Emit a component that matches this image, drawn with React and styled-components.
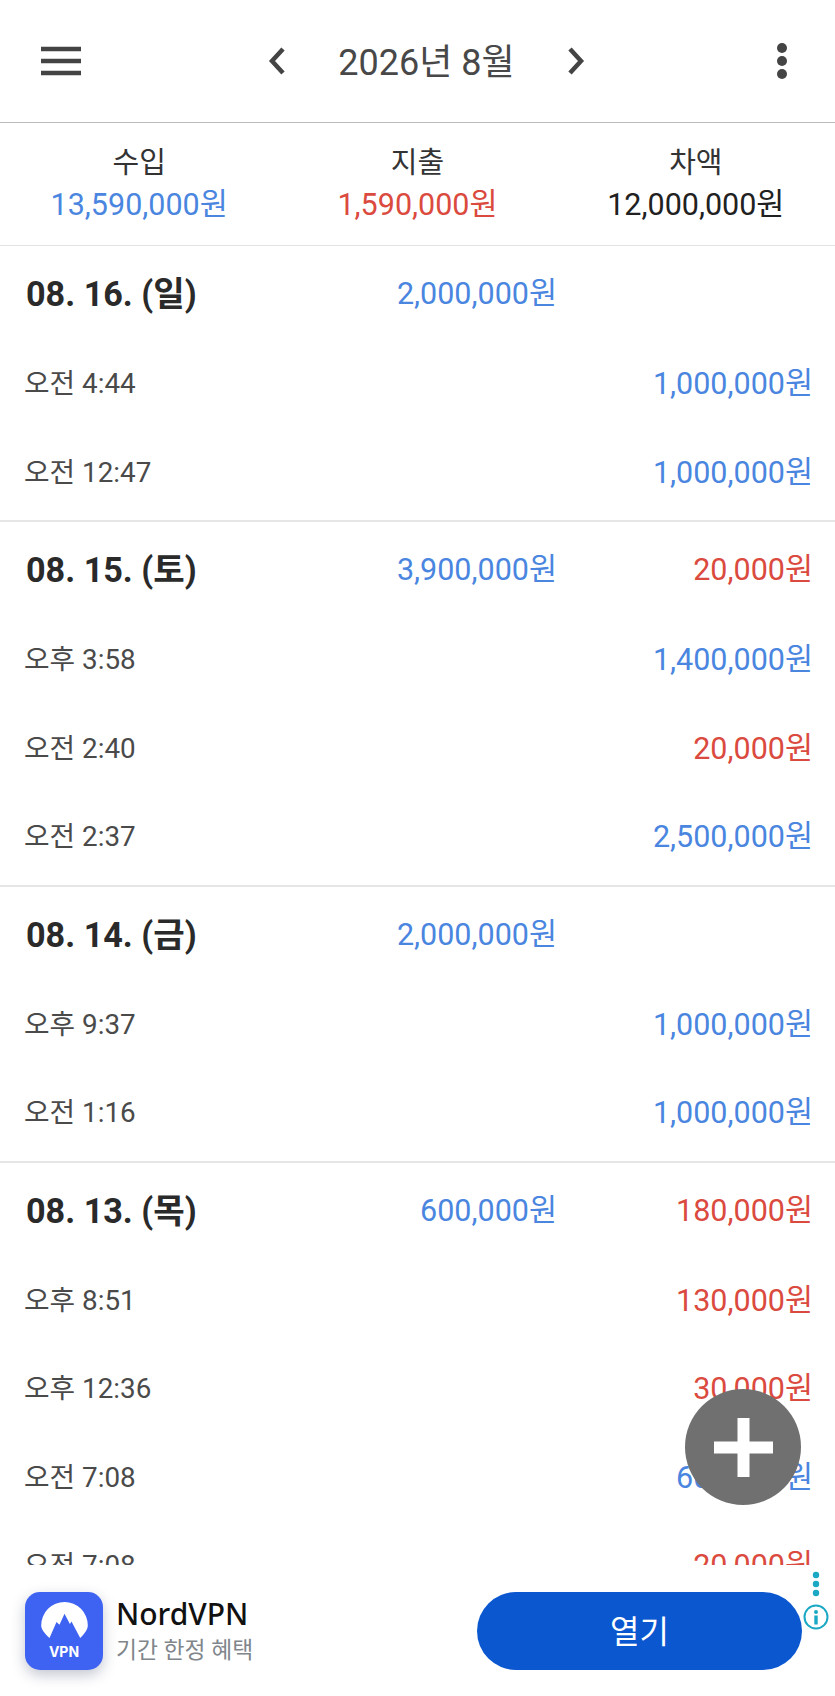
import styled, { createGlobalStyle } from 'styled-components';

const GlobalStyle = createGlobalStyle`
  html, body {
    margin: 0;
    padding: 0;
    background: #fff;
    font-family: Roboto, "Noto Sans CJK KR", sans-serif;
  }
`;

const BLUE = '#4a86e0';
const RED = '#db4a3e';

const Screen = styled.div`
  position: relative;
  width: 835px;
  height: 1696px;
  display: flex;
  flex-direction: column;
  overflow: hidden;
  background: #fff;
`;

const Header = styled.header`
  height: 122px;
  flex: none;
  display: flex;
  align-items: center;
  justify-content: space-between;
  padding: 0 48px 0 41px;
  border-bottom: 1px solid #bdbdbd;
`;

const IconButton = styled.svg`
  display: block;
  flex: none;
  color: #444;
`;

const MonthNav = styled.div`
  display: flex;
  align-items: center;
  gap: 30px;
  margin-right: 5px;
`;

const MonthTitle = styled.div`
  width: 219px;
  padding-top: 3px;
  text-align: center;
  font-size: 36px;
  line-height: 44px;
  color: #484848;
`;

const Summary = styled.section`
  height: 122px;
  flex: none;
  display: grid;
  grid-template-columns: repeat(3, 1fr);
  align-content: center;
  border-bottom: 1px solid #e4e4e4;
`;

const SummaryCell = styled.div`
  text-align: center;
`;

const SummaryLabel = styled.div`
  font-size: 29px;
  line-height: 42px;
  color: #333;
`;

const SummaryValue = styled.div`
  font-size: 30.5px;
  line-height: 42px;
  color: ${(p) => p.$color || '#212121'};
`;

const List = styled.main`
  flex: 1;
  min-height: 0;
  overflow: hidden;
`;

const Day = styled.section`
  padding-bottom: 6px;
  border-bottom: 2px solid #e6e6e6;

  &:last-child {
    border-bottom: none;
  }
`;

const DayHeader = styled.div`
  height: 90px;
  padding: 0 22px 1px 26px;
  display: flex;
  align-items: center;
`;

const DayDate = styled.div`
  flex: 1;
  font-size: 34.2px;
  font-weight: 700;
  color: #2a2a2a;
`;

const Amount = styled.div`
  font-size: 30.5px;
  text-align: right;
  color: ${(p) => p.$color};
`;

const DayExpense = styled(Amount)`
  width: 256px;
`;

const Row = styled.div`
  height: 88.5px;
  display: flex;
  align-items: center;
  justify-content: space-between;
  padding: 0 22px 0 24px;
`;

const Time = styled.div`
  font-size: 27.8px;
  color: #4a4a4a;
`;

const Fab = styled.button`
  position: absolute;
  left: 685px;
  top: 1389px;
  width: 116px;
  height: 116px;
  padding: 0;
  border: none;
  border-radius: 50%;
  background: #707070;
  display: flex;
  align-items: center;
  justify-content: center;
`;

const Ad = styled.aside`
  position: relative;
  height: 131px;
  flex: none;
  display: flex;
  align-items: center;
  padding: 0 33px 0 25px;
  background: #fff;
`;

const AdIcon = styled.div`
  width: 78px;
  height: 78px;
  flex: none;
  border-radius: 15px;
  background: #3e63f2;
  box-shadow: 0 5px 14px rgba(40, 50, 90, 0.28);
  display: flex;
  flex-direction: column;
  align-items: center;
  padding-top: 10px;
  box-sizing: border-box;
`;

const AdIconLabel = styled.div`
  font-family: Inter, sans-serif;
  font-size: 14px;
  line-height: 16px;
  margin-top: 5px;
  font-weight: 700;
  color: #fff;
`;

const AdText = styled.div`
  flex: 1;
  margin-left: 13px;
  padding-top: 2px;
`;

const AdName = styled.div`
  font-family: "Noto Sans", sans-serif;
  font-size: 30px;
  line-height: 38px;
  font-weight: 500;
  color: #111;
`;

const AdSub = styled.div`
  font-size: 22.8px;
  line-height: 36px;
  color: #80868b;
`;

const OpenButton = styled.button`
  width: 325px;
  height: 78px;
  padding: 0 0 4px;
  border: none;
  border-radius: 39px;
  background: #0b57d0;
  color: #fff;
  font-family: inherit;
  font-size: 32px;
`;

const AdBadge = styled.svg`
  position: absolute;
  left: 802px;
  top: 3px;
`;

const days = [
  {
    date: '08. 16. (일)',
    income: '2,000,000원',
    rows: [
      ['오전 4:44', '1,000,000원', BLUE],
      ['오전 12:47', '1,000,000원', BLUE],
    ],
  },
  {
    date: '08. 15. (토)',
    income: '3,900,000원',
    expense: '20,000원',
    rows: [
      ['오후 3:58', '1,400,000원', BLUE],
      ['오전 2:40', '20,000원', RED],
      ['오전 2:37', '2,500,000원', BLUE],
    ],
  },
  {
    date: '08. 14. (금)',
    income: '2,000,000원',
    rows: [
      ['오후 9:37', '1,000,000원', BLUE],
      ['오전 1:16', '1,000,000원', BLUE],
    ],
  },
  {
    date: '08. 13. (목)',
    income: '600,000원',
    expense: '180,000원',
    rows: [
      ['오후 8:51', '130,000원', RED],
      ['오후 12:36', '30,000원', RED],
      ['오전 7:08', '600,000원', BLUE],
      ['오전 7:08', '20,000원', RED],
    ],
  },
];

const App = () => (
  <Screen>
    <GlobalStyle />
    <Header>
      <IconButton width="40" height="30" viewBox="0 0 40 30">
        <path d="M0 3h40M0 15h40M0 27h40" stroke="currentColor" strokeWidth="4.5" />
      </IconButton>
      <MonthNav>
        <IconButton width="20" height="30" viewBox="0 0 20 30">
          <path d="M16 3 5 15l11 12" fill="none" stroke="currentColor" strokeWidth="4.5" />
        </IconButton>
        <MonthTitle>2026년 8월</MonthTitle>
        <IconButton width="20" height="30" viewBox="0 0 20 30">
          <path d="M4 3l11 12L4 27" fill="none" stroke="currentColor" strokeWidth="4.5" />
        </IconButton>
      </MonthNav>
      <IconButton width="10" height="36" viewBox="0 0 10 36">
        <circle cx="5" cy="5" r="5" fill="currentColor" />
        <circle cx="5" cy="18" r="5" fill="currentColor" />
        <circle cx="5" cy="31" r="5" fill="currentColor" />
      </IconButton>
    </Header>

    <Summary>
      <SummaryCell>
        <SummaryLabel>수입</SummaryLabel>
        <SummaryValue $color={BLUE}>13,590,000원</SummaryValue>
      </SummaryCell>
      <SummaryCell>
        <SummaryLabel>지출</SummaryLabel>
        <SummaryValue $color={RED}>1,590,000원</SummaryValue>
      </SummaryCell>
      <SummaryCell>
        <SummaryLabel>차액</SummaryLabel>
        <SummaryValue>12,000,000원</SummaryValue>
      </SummaryCell>
    </Summary>

    <List>
      {days.map((day) => (
        <Day key={day.date}>
          <DayHeader>
            <DayDate>{day.date}</DayDate>
            <Amount $color={BLUE}>{day.income}</Amount>
            <DayExpense $color={RED}>{day.expense}</DayExpense>
          </DayHeader>
          {day.rows.map(([time, amount, color], i) => (
            <Row key={i}>
              <Time>{time}</Time>
              <Amount $color={color}>{amount}</Amount>
            </Row>
          ))}
        </Day>
      ))}
    </List>

    <Fab aria-label="추가">
      <svg width="59" height="59" viewBox="0 0 59 59">
        <path d="M23.5 0h12v23.5H59v12H35.5V59h-12V35.5H0v-12h23.5z" fill="#fff" />
      </svg>
    </Fab>

    <Ad>
      <AdIcon>
        <svg width="47" height="37" viewBox="0 0 46.600 37">
          <path
            d="M8.300 36C3 31 0 27.500 0 23.300A23.300 23.300 0 0 1 46.600 23.300C46.600 27.500 44 31 39 36L30.300 19.500 28.700 22 23.300 11.700 18.300 22.700 15.300 20z"
            fill="#fff"
          />
        </svg>
        <AdIconLabel>VPN</AdIconLabel>
      </AdIcon>
      <AdText>
        <AdName>NordVPN</AdName>
        <AdSub>기간 한정 혜택</AdSub>
      </AdText>
      <OpenButton>열기</OpenButton>
      <AdBadge width="28" height="68" viewBox="0 0 28 68">
        <g fill="#1aa8c4">
          <circle cx="14" cy="7" r="3.200" />
          <circle cx="14" cy="16" r="3.200" />
          <circle cx="14" cy="25" r="3.200" />
          <circle cx="14" cy="44" r="2" />
          <rect x="12.300" y="47.500" width="3.400" height="9" />
        </g>
        <circle cx="14" cy="49" r="11.500" fill="none" stroke="#1aa8c4" strokeWidth="2" />
      </AdBadge>
    </Ad>
  </Screen>
);

export default App;
